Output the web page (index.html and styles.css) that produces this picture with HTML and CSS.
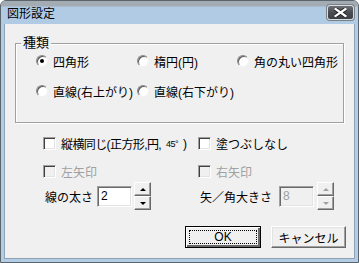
FILE: index.html
```html
<!DOCTYPE html>
<html lang="ja">
<head>
  <meta charset="utf-8">
  <title>図形設定</title>
  <link rel="stylesheet" href="styles.css">
</head>
<body>
  <div class="window">
    <div class="titlebar">
      <span class="title">図形設定</span>
      <button class="close" aria-label="閉じる">
        <svg width="13" height="9" viewBox="0 0 13 9">
          <path d="M1.5 1 L11.5 8 M11.5 1 L1.5 8" stroke="#222" stroke-width="4" stroke-linecap="square"/>
          <path d="M1.5 1 L11.5 8 M11.5 1 L1.5 8" stroke="#fff" stroke-width="2.2" stroke-linecap="square"/>
        </svg>
      </button>
    </div>

    <div class="dialog">
      <fieldset class="group">
        <legend>種類</legend>
        <div class="radio-grid">
          <label class="radio"><span class="circle checked"></span>四角形</label>
          <label class="radio"><span class="circle"></span>楕円(円)</label>
          <label class="radio"><span class="circle"></span>角の丸い四角形</label>
          <label class="radio"><span class="circle"></span>直線(右上がり)</label>
          <label class="radio"><span class="circle"></span>直線(右下がり)</label>
        </div>
      </fieldset>

      <div class="options">
        <div class="row">
          <label class="check tight"><span class="box"></span>縦横同じ(正方形,円,<small>45°</small>)</label>
          <label class="check"><span class="box"></span>塗つぶしなし</label>
        </div>
        <div class="row">
          <label class="check disabled"><span class="box"></span>左矢印</label>
          <label class="check disabled"><span class="box"></span>右矢印</label>
        </div>
        <div class="row spin-row">
          <div class="spin-field first">
            <span class="spin-label">線の太さ</span>
            <span class="textbox">2</span>
            <span class="spinner">
              <span class="spin-btn"><span class="up"></span></span>
              <span class="spin-btn"><span class="down"></span></span>
            </span>
          </div>
          <div class="spin-field second disabled">
            <span class="spin-label">矢／角大きさ</span>
            <span class="textbox">8</span>
            <span class="spinner">
              <span class="spin-btn"><span class="up"></span></span>
              <span class="spin-btn"><span class="down"></span></span>
            </span>
          </div>
        </div>
      </div>

      <div class="buttons">
        <button class="btn default"><span class="focus">OK</span></button>
        <button class="btn">キャンセル</button>
      </div>
    </div>
  </div>
</body>
</html>
```

FILE: styles.css
```css
* {
  box-sizing: border-box;
  margin: 0;
  padding: 0;
}

body {
  font-family: "Liberation Sans", "Noto Sans CJK JP", sans-serif;
  font-size: 12px;
  color: #000;
  background: #fff;
}

.window {
  width: 359px;
  height: 263px;
  border: 1px solid #5c646c;
  border-radius: 6px 6px 0 0;
  background: #b4cde6;
  display: flex;
  flex-direction: column;
  overflow: hidden;
}

/* title bar */
.titlebar {
  height: 23px;
  flex: none;
  display: flex;
  align-items: flex-start;
  justify-content: space-between;
  padding: 0 4px 0 6px;
  background: linear-gradient(to bottom, #a3abb3 0, #a3abb3 5px, #b1cbe4 6px, #b1cbe4 100%);
}

.title {
  margin-top: 6px;
  line-height: 14px;
}

.close {
  margin-top: 4px;
  width: 27px;
  height: 15px;
  border: 1px solid #d8dde2;
  border-radius: 3px;
  background: linear-gradient(to bottom, #6c7076 0, #4a4d52 50%, #3c3f43 100%);
  display: flex;
  align-items: center;
  justify-content: center;
  box-shadow: 0 0 0 1px #7a8088;
}

/* dialog body */
.dialog {
  flex: 1;
  margin: 0 3px 3px;
  background: #f0f0f0;
  border: 1px solid #8fa2b4;
  border-top: none;
  display: flex;
  flex-direction: column;
}

.group {
  margin: 12px 10px 0 10px;
  padding: 0;
  border: 1px solid #a0a0a0;
  box-shadow: 1px 1px 0 #fff, inset 1px 1px 0 #fff;
}

.group legend {
  margin-left: 5px;
  padding: 0 2px;
  line-height: 14px;
  font-size: 13px;
}

.radio-grid {
  display: grid;
  grid-template-columns: 101px 100px auto;
  row-gap: 14px;
  padding: 3px 0 23px 20px;
}

.radio {
  display: flex;
  align-items: center;
  gap: 5px;
  height: 16px;
  white-space: nowrap;
}

.circle {
  width: 12px;
  height: 12px;
  border-radius: 50%;
  border: 1px solid;
  border-color: #8a8a8a #f4f4f4 #f4f4f4 #8a8a8a;
  background: radial-gradient(circle at 60% 60%, #fff 0, #fff 55%, #e8e8e8 100%);
  box-shadow: inset 1px 1px 0 #5a5a5a;
  display: flex;
  align-items: center;
  justify-content: center;
  flex: none;
}

.circle.checked::after {
  content: "";
  width: 4px;
  height: 4px;
  border-radius: 50%;
  background: #000;
}

/* checkboxes and spin fields */
.options {
  padding: 12px 0 0 38px;
  display: flex;
  flex-direction: column;
}

.row {
  display: grid;
  grid-template-columns: 155px auto;
  height: 16px;
  margin-bottom: 12px;
}

.check {
  display: flex;
  align-items: center;
  gap: 5px;
  white-space: nowrap;
}

.check.tight {
  letter-spacing: -0.6px;
}

.check small {
  font-size: 9px;
}

.box {
  width: 13px;
  height: 13px;
  flex: none;
  background: #fff;
  border: 1px solid;
  border-color: #a0a0a0 #fff #fff #a0a0a0;
  box-shadow: inset 1px 1px 0 #404040, inset -1px -1px 0 #e3e3e3;
}

.check.disabled {
  color: #a0a0a0;
}

.check.disabled .box {
  background: #f0f0f0;
}

.spin-row {
  height: 28px;
  margin-top: -9px;
  margin-bottom: 0;
}

.spin-field {
  display: flex;
  align-items: center;
  padding-left: 2px;
}

.spin-field.first .spin-label {
  width: 52px;
}

.spin-field.second .spin-label {
  width: 79px;
  color: #000;
}

.textbox {
  width: 35px;
  height: 21px;
  background: #fff;
  border: 1px solid;
  border-color: #a0a0a0 #fff #fff #a0a0a0;
  box-shadow: inset 1px 1px 0 #696969, inset -1px -1px 0 #e3e3e3;
  padding: 2px 0 0 3px;
  line-height: 15px;
  margin-top: 1px;
}

.spinner {
  display: flex;
  flex-direction: column;
  margin-left: 2px;
}

.second .spinner {
  margin-left: 3px;
}

.spin-btn {
  width: 17px;
  height: 14px;
  background: #f0f0f0;
  border: 1px solid;
  border-color: #fff #696969 #696969 #fff;
  box-shadow: inset -1px -1px 0 #a0a0a0;
  display: flex;
  align-items: center;
  justify-content: center;
}

.up {
  width: 0;
  height: 0;
  border-left: 3px solid transparent;
  border-right: 3px solid transparent;
  border-bottom: 3px solid #000;
}

.down {
  width: 0;
  height: 0;
  border-left: 3px solid transparent;
  border-right: 3px solid transparent;
  border-top: 3px solid #000;
}

.disabled .textbox {
  background: #f0f0f0;
  color: #a0a0a0;
}

.disabled .up {
  border-bottom-color: #a0a0a0;
}

.disabled .down {
  border-top-color: #a0a0a0;
}

/* bottom buttons */
.buttons {
  display: flex;
  justify-content: flex-end;
  gap: 10px;
  padding: 16px 8px 0 0;
}

.btn {
  width: 75px;
  height: 22px;
  font-family: inherit;
  font-size: 12px;
  color: #000;
  background: #f0f0f0;
  border: 1px solid;
  border-color: #fff #696969 #696969 #fff;
  box-shadow: inset -1px -1px 0 #a0a0a0, inset 1px 1px 0 #e3e3e3;
  display: flex;
  align-items: center;
  justify-content: center;
}

.btn.default {
  width: 76px;
  border: 1px solid #000;
  box-shadow: inset 1px 1px 0 #fff, inset -2px -2px 0 #696969, inset -1px -1px 0 #a0a0a0;
  padding: 3px;
}

.focus {
  flex: 1;
  align-self: stretch;
  display: flex;
  align-items: center;
  justify-content: center;
  border: 1px dotted #000;
}
```
